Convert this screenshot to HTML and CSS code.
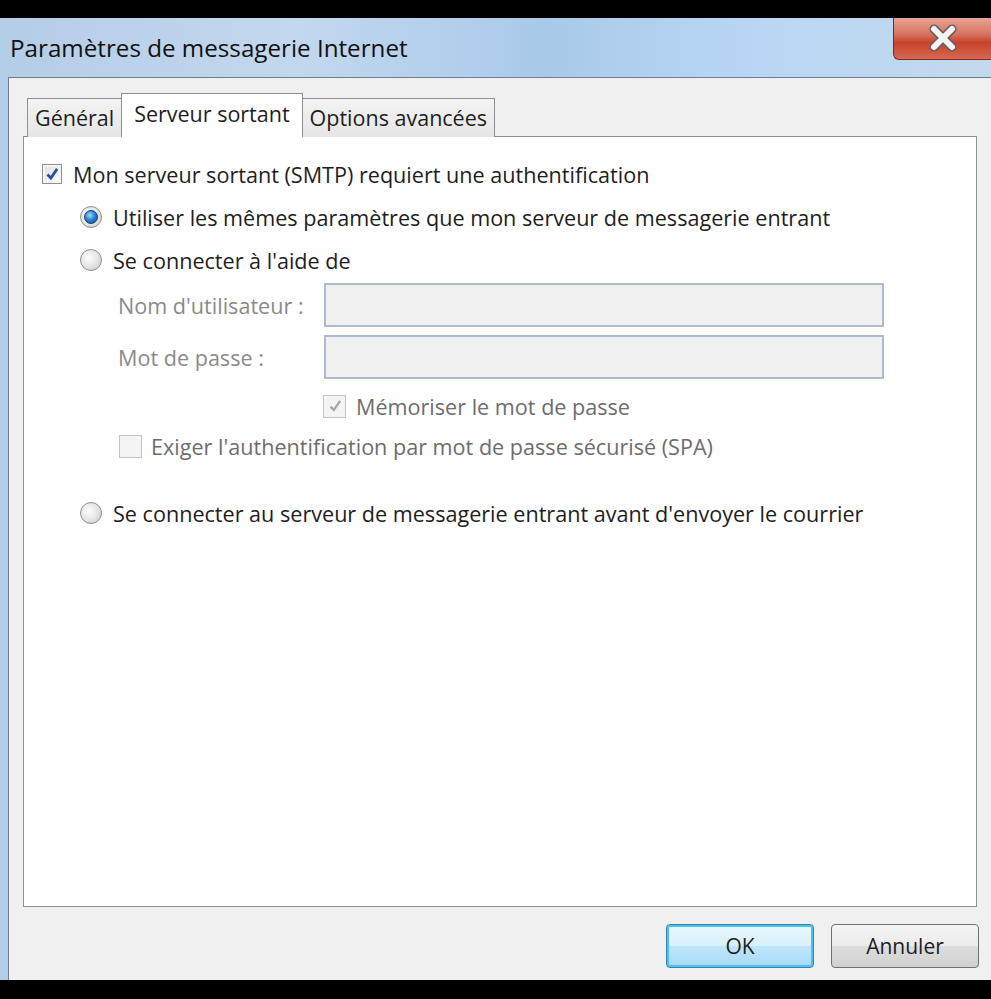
FILE: index.html
```html
<!DOCTYPE html>
<html lang="fr">
<head>
    <meta charset="UTF-8">
    <title>Paramètres de messagerie Internet</title>
    <link rel="stylesheet" href="styles.css">
</head>
<body>
    <div class="window">
        <div class="titlebar">
            <span class="title">Paramètres de messagerie Internet</span>
            <button class="close" aria-label="Fermer">
                <svg width="40" height="30" viewBox="0 0 40 30">
                    <path d="M11 6 L29 24 M29 6 L11 24" stroke="#6a5f5f" stroke-width="9" stroke-linecap="round"/>
                    <path d="M11 6 L29 24 M29 6 L11 24" stroke="#f4f4f4" stroke-width="6" stroke-linecap="round"/>
                </svg>
            </button>
        </div>
        <div class="frame">
            <div class="client">
                <div class="tabs">
                    <div class="tab">Général</div>
                    <div class="tab active">Serveur sortant</div>
                    <div class="tab">Options avancées</div>
                </div>
                <div class="panel">
                    <label class="row r1">
                        <span class="check on"><svg viewBox="0 0 14 14"><path d="M3 7.5 L6 10.5 L11.5 2.5" stroke="#2b4fa8" stroke-width="2.4" fill="none"/></svg></span>
                        <span>Mon serveur sortant (SMTP) requiert une authentification</span>
                    </label>
                    <div class="sub">
                        <label class="row r2">
                            <span class="radio on"></span>
                            <span>Utiliser les mêmes paramètres que mon serveur de messagerie entrant</span>
                        </label>
                        <label class="row r3">
                            <span class="radio"></span>
                            <span>Se connecter à l'aide de</span>
                        </label>
                        <div class="fields">
                            <span class="lbl">Nom d'utilisateur :</span>
                            <input type="text" class="field" disabled>
                            <span class="lbl">Mot de passe :</span>
                            <input type="password" class="field" disabled>
                        </div>
                        <label class="row dim r4">
                            <span class="check off on"><svg viewBox="0 0 14 14"><path d="M3 7.5 L6 10.5 L11.5 2.5" stroke="#a8a8a8" stroke-width="2" fill="none"/></svg></span>
                            <span>Mémoriser le mot de passe</span>
                        </label>
                        <label class="row dim r5">
                            <span class="check off"></span>
                            <span>Exiger l'authentification par mot de passe sécurisé (SPA)</span>
                        </label>
                        <label class="row r6">
                            <span class="radio"></span>
                            <span>Se connecter au serveur de messagerie entrant avant d'envoyer le courrier</span>
                        </label>
                    </div>
                </div>
                <div class="actions">
                    <button class="btn default">OK</button>
                    <button class="btn">Annuler</button>
                </div>
            </div>
        </div>
    </div>
</body>
</html>
```

FILE: styles.css
```css
body {
    margin: 0;
    background-color: #000;
    font-family: 'Open Sans', 'Noto Sans', sans-serif;
    color: #1e1e1e;
    overflow: hidden;
}
.window {
    margin-top: 18px;
    height: 962px;
    display: flex;
    flex-direction: column;
    background: linear-gradient(90deg, #b4cde6 0%, #c2d8ee 30%, #a9c9ea 55%, #b8d6f4 75%, #c3d9ee 100%);
}
.titlebar {
    height: 59px;
    display: flex;
    justify-content: space-between;
    align-items: flex-start;
    padding-left: 10px;
    box-sizing: border-box;
}
.title {
    font-size: 24.2px;
    margin-top: 13px;
    color: #111;
}
.close {
    width: 99px;
    height: 42px;
    margin-right: -1px;
    border: 1px solid #7a2a1e;
    border-top: none;
    border-radius: 0 0 0 6px;
    background: linear-gradient(180deg, #e8a394 0%, #d5735f 40%, #c8402a 60%, #d66a52 100%);
    display: flex;
    align-items: center;
    justify-content: center;
    padding: 0;
}
.close svg {
    display: block;
    margin-top: -2px;
}
.frame {
    flex: 1;
    display: flex;
    padding-left: 8px;
}
.client {
    flex: 1;
    background-color: #f0f0f0;
    border-top: 1px solid #6f7c8c;
    border-left: 1px solid #6f7c8c;
    padding-left: 14px;
    padding-right: 14px;
    display: flex;
    flex-direction: column;
}
.tabs {
    display: flex;
    align-items: flex-end;
    margin-top: 15px;
    padding-left: 4px;
    height: 44px;
    position: relative;
    z-index: 1;
    margin-bottom: -1px;
}
.tab {
    height: 39px;
    box-sizing: border-box;
    padding: 0 7px;
    font-size: 21.5px;
    line-height: 37px;
    border: 1px solid #8d8f94;
    border-bottom: none;
    background: linear-gradient(180deg, #f3f3f3 0%, #e6e6e6 100%);
    margin-right: -1px;
}
.tab.active {
    height: 44px;
    line-height: 40px;
    background: #fff;
    padding: 0 12px;
    position: relative;
    z-index: 2;
}
.panel {
    height: 771px;
    box-sizing: border-box;
    background-color: #fff;
    border: 1px solid #8d8f94;
    padding: 15px 0 0 18px;
}
.row {
    display: flex;
    align-items: center;
    font-size: 21.6px;
    gap: 11px;
}
.r1 { height: 44px; }
.r2 { height: 42px; }
.r3 { height: 44px; }
.r4 { height: 28px; margin-top: 13px; margin-left: 243px; gap: 10px; }
.r5 { height: 28px; margin-top: 12px; margin-left: 39px; gap: 9px; }
.r6 { height: 28px; margin-top: 39px; }
.sub {
    margin-left: 38px;
}
.dim {
    color: #6d6d6d;
}
.check {
    width: 20px;
    height: 20px;
    box-sizing: border-box;
    border: 1px solid #8e8f8f;
    background: linear-gradient(135deg, #dcdcdc 0%, #f6f6f6 70%, #ffffff 100%);
    box-shadow: inset 0 0 0 2px #f4f4f4;
    display: flex;
    align-items: center;
    justify-content: center;
}
.check svg {
    width: 16px;
    height: 16px;
}
.check.off {
    width: 23px;
    height: 23px;
    border-color: #c4c4c4;
    background: #f4f4f4;
    box-shadow: none;
}
.radio {
    width: 22px;
    height: 22px;
    border-radius: 50%;
    box-sizing: border-box;
    border: 1px solid #8e8f8f;
    background: radial-gradient(circle at 40% 40%, #fdfdfd 0%, #e8e8e8 45%, #c9c9c9 100%);
    display: flex;
    align-items: center;
    justify-content: center;
}
.radio.on::after {
    content: '';
    width: 12px;
    height: 12px;
    border-radius: 50%;
    border: 1px solid #1c3a6e;
    background: radial-gradient(circle at 40% 35%, #9fdcff 0%, #2a86d6 45%, #0b3f86 100%);
}
.fields {
    display: grid;
    grid-template-columns: 206px 560px;
    grid-auto-rows: 44px;
    row-gap: 8px;
    margin-top: 1px;
    margin-left: 38px;
    align-items: center;
}
.lbl {
    font-size: 21.6px;
    color: #8a8a8a;
}
.field {
    height: 44px;
    box-sizing: border-box;
    margin: 0;
    border: 2px solid #aebbcc;
    background-color: #f0f0f0;
}
.actions {
    display: flex;
    justify-content: flex-end;
    gap: 17px;
    margin-top: 17px;
    margin-right: -2px;
}
.btn {
    width: 148px;
    height: 44px;
    border-radius: 4px;
    border: 1px solid #707070;
    background: linear-gradient(180deg, #f4f4f4 0%, #ebebeb 50%, #dddddd 51%, #d0d0d0 100%);
    font-family: 'Open Sans', 'Noto Sans', sans-serif;
    font-size: 21px;
    color: #1e1e1e;
    padding: 0;
}
.btn.default {
    border: 1px solid #3c7fb1;
    box-shadow: inset 0 0 0 2px #48c2ef;
    background: linear-gradient(180deg, #eaf6fd 0%, #d9f0fc 50%, #bee6fd 51%, #a7d9f5 100%);
}
```
